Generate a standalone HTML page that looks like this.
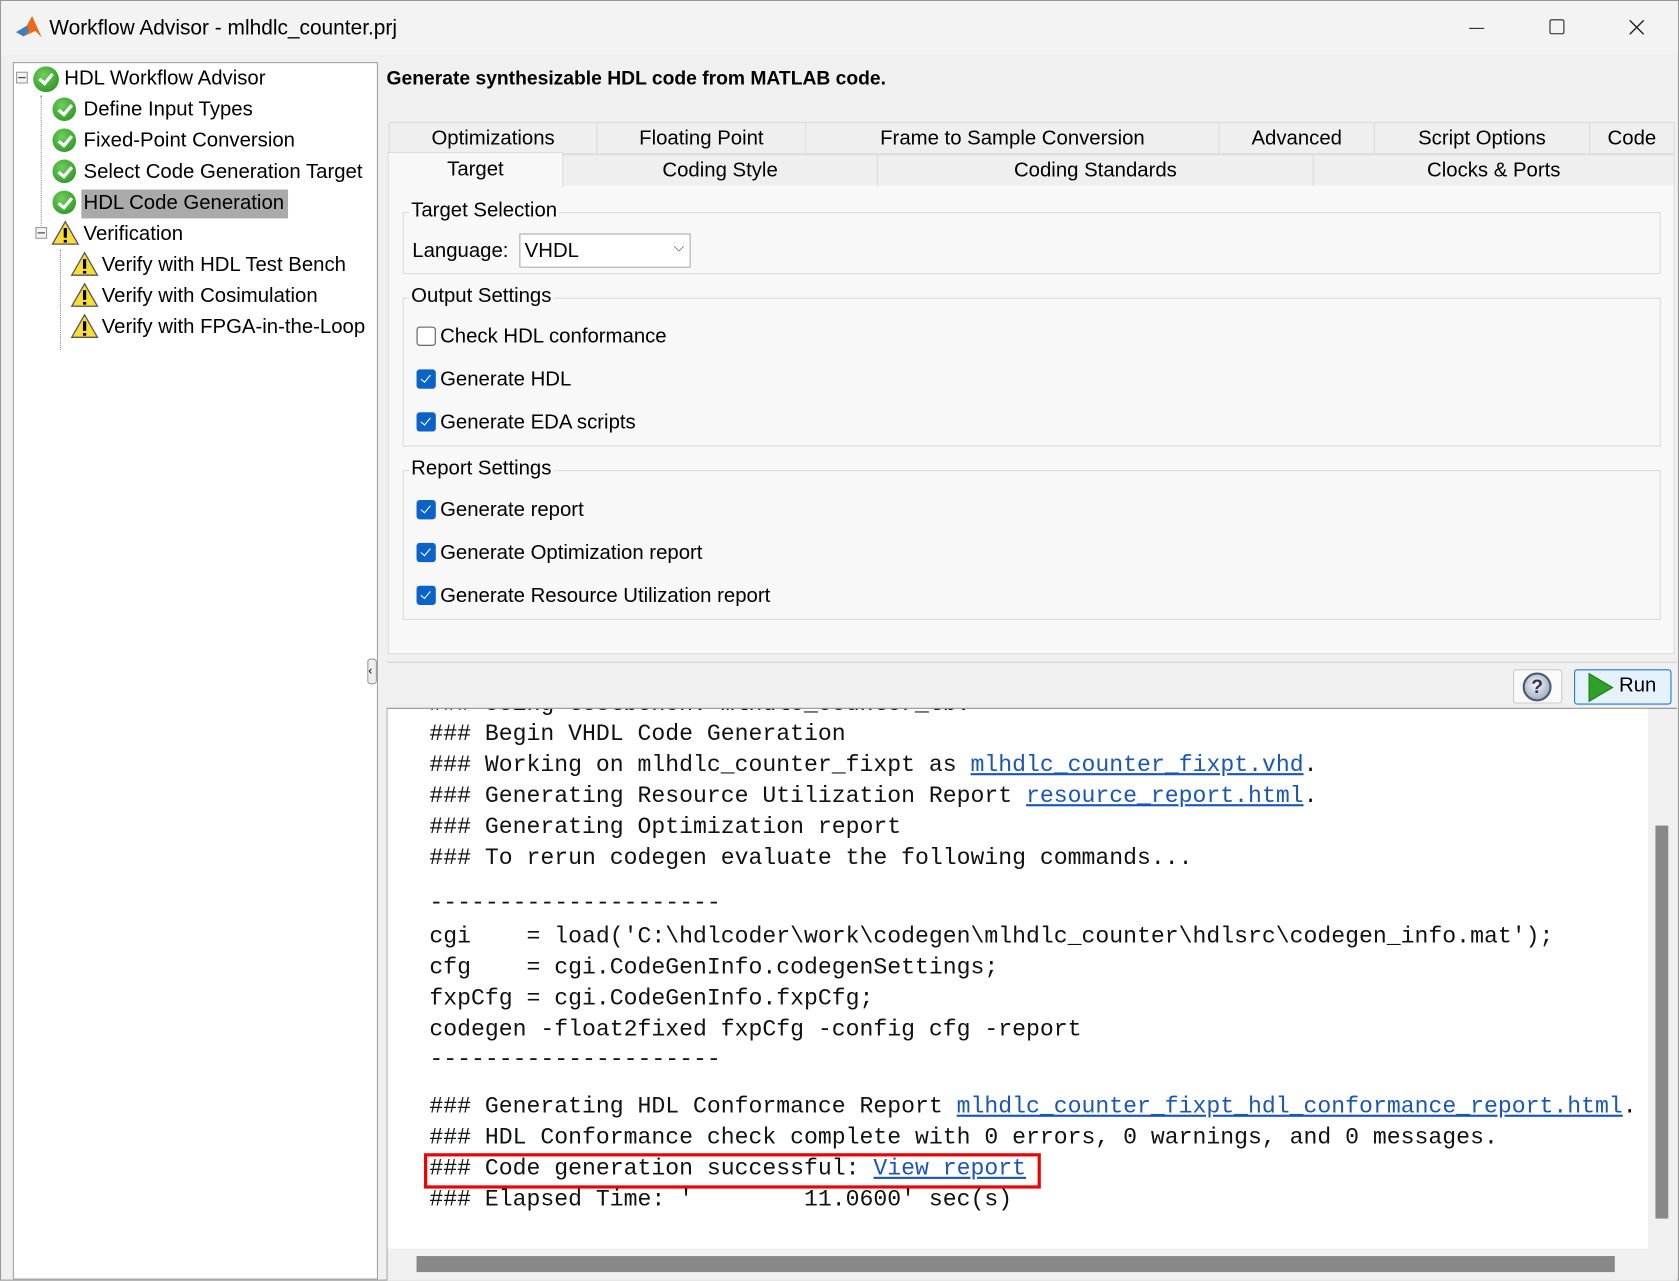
<!DOCTYPE html>
<html><head><meta charset="utf-8"><style>
*{box-sizing:border-box;margin:0;padding:0}
html,body{width:1679px;height:1281px;overflow:hidden;background:#f0f0f0}
#w{position:absolute;left:0;top:0;width:1568px;height:1196px;transform:scale(1.07079);transform-origin:0 0;font-family:"Liberation Sans",sans-serif;color:#000;background:#f0f0f0;border:1px solid #999}
.a{position:absolute;white-space:nowrap}
.t{font-size:19px}
.mono{font-family:"Liberation Mono",monospace;font-size:21.6px;color:#111;white-space:pre}
.lk{color:#1a56b8;text-decoration:underline}
.tab{position:absolute;height:30px;border:1px solid #dcdcdc;background:#efefef;font-size:19px;text-align:center;line-height:30px}
.grp{position:absolute;border:1px solid #dcdcdc}
.lg{position:absolute;background:#f8f8f8;font-size:19px;padding:0 2px;top:-13px;left:5px}
.cb{position:absolute;width:18px;height:18px;border-radius:3px;background:#0b63c8}
.cb:after{content:"";position:absolute;left:6px;top:3px;width:4px;height:8px;border:solid #fff;border-width:0 1.5px 1.5px 0;transform:rotate(40deg)}
.ok{position:absolute;width:22px;height:22px;border-radius:50%;background:radial-gradient(circle at 40% 35%,#6fcf5a,#1f8a1a)}
.ok:after{content:"";position:absolute;left:8px;top:4px;width:5px;height:10px;border:solid #fff;border-width:0 3px 3px 0;transform:rotate(40deg)}
</style></head><body><div id="w">
<div class="a" style="left:0;top:0;width:1566px;height:50px;background:#f3f3f3"></div>
<svg class="a" style="left:12px;top:12px" width="28" height="26" viewBox="0 0 28 26"><polygon points="2,17 12,11 17,2 26,22 20,16 9,21" fill="#e86a1a"/><polygon points="2,17 12,11 14,16 9,21" fill="#3a7fc4"/></svg>
<div class="a" style="left:45px;top:14px;font-size:19.5px">Workflow Advisor - mlhdlc_counter.prj</div>
<div class="a" style="left:1371px;top:25px;width:14px;height:1px;background:#222"></div>
<div class="a" style="left:1446px;top:17px;width:14px;height:14px;border:1.5px solid #222;border-radius:2px"></div>
<svg class="a" style="left:1520px;top:17px" width="15" height="15"><path d="M1 1L14 14M14 1L1 14" stroke="#222" stroke-width="1.3"/></svg>

<!-- tree -->
<div class="a" style="left:11px;top:57px;width:341px;height:1137px;background:#fff;border:1px solid #a0a0a0"></div>
<div class="a" style="left:14px;top:66px;width:11px;height:11px;border:1px solid #999;background:#f4f4f4"></div><div class="a" style="left:16px;top:71px;width:7px;height:1px;background:#333"></div>
<div class="a" style="left:37px;top:88px;height:124px;border-left:1px dotted #888"></div>
<div class="a" style="left:32px;top:211px;width:11px;height:11px;border:1px solid #999;background:#f4f4f4"></div><div class="a" style="left:34px;top:216px;width:7px;height:1px;background:#333"></div>
<div class="a" style="left:55px;top:232px;height:94px;border-left:1px dotted #888"></div>
<div class="ok" style="left:30px;top:61px;width:24px;height:24px"></div>
<div class="a t" style="left:59px;top:62px">HDL Workflow Advisor</div>
<div class="ok" style="left:48px;top:90px"></div><div class="a t" style="left:77px;top:91px">Define Input Types</div>
<div class="ok" style="left:48px;top:119px"></div><div class="a t" style="left:77px;top:120px">Fixed-Point Conversion</div>
<div class="ok" style="left:48px;top:148px"></div><div class="a t" style="left:77px;top:149px">Select Code Generation Target</div>
<div class="a" style="left:75px;top:176px;width:193px;height:27px;background:#aaa"></div>
<div class="ok" style="left:48px;top:177px"></div><div class="a t" style="left:77px;top:178px">HDL Code Generation</div>
<svg class="a" style="left:47px;top:204px" width="26" height="24"><polygon points="13,2 25,23 1,23" fill="#f7dc3a" stroke="#555" stroke-width="1.2"/><rect x="11.5" y="8" width="3" height="9" fill="#000"/><rect x="11.5" y="19" width="3" height="2.5" fill="#000"/></svg>
<div class="a t" style="left:77px;top:207px">Verification</div>
<svg class="a" style="left:65px;top:233px" width="26" height="24"><polygon points="13,2 25,23 1,23" fill="#f7dc3a" stroke="#555" stroke-width="1.2"/><rect x="11.5" y="8" width="3" height="9" fill="#000"/><rect x="11.5" y="19" width="3" height="2.5" fill="#000"/></svg>
<div class="a t" style="left:94px;top:236px">Verify with HDL Test Bench</div>
<svg class="a" style="left:65px;top:262px" width="26" height="24"><polygon points="13,2 25,23 1,23" fill="#f7dc3a" stroke="#555" stroke-width="1.2"/><rect x="11.5" y="8" width="3" height="9" fill="#000"/><rect x="11.5" y="19" width="3" height="2.5" fill="#000"/></svg>
<div class="a t" style="left:94px;top:265px">Verify with Cosimulation</div>
<svg class="a" style="left:65px;top:291px" width="26" height="24"><polygon points="13,2 25,23 1,23" fill="#f7dc3a" stroke="#555" stroke-width="1.2"/><rect x="11.5" y="8" width="3" height="9" fill="#000"/><rect x="11.5" y="19" width="3" height="2.5" fill="#000"/></svg>
<div class="a t" style="left:94px;top:294px">Verify with FPGA-in-the-Loop</div>
<div class="a" style="left:342px;top:614px;width:9px;height:24px;border:1px solid #999;border-radius:3px;background:#eee;font-size:11px;line-height:22px">‹</div>

<!-- right -->
<div class="a" style="left:360px;top:62px;font-size:18px;font-weight:bold">Generate synthesizable HDL code from MATLAB code.</div>
<div class="tab" style="left:362px;top:113px;width:195px">Optimizations</div>
<div class="tab" style="left:556px;top:113px;width:196px">Floating Point</div>
<div class="tab" style="left:751px;top:113px;width:387px">Frame to Sample Conversion</div>
<div class="tab" style="left:1137px;top:113px;width:146px">Advanced</div>
<div class="tab" style="left:1282px;top:113px;width:202px">Script Options</div>
<div class="tab" style="left:1483px;top:113px;width:80px">Code</div>
<div class="tab" style="left:524px;top:143px;width:295px">Coding Style</div>
<div class="tab" style="left:818px;top:143px;width:408px">Coding Standards</div>
<div class="tab" style="left:1225px;top:143px;width:338px">Clocks &amp; Ports</div>
<div class="a" style="left:361px;top:172px;width:1202px;height:438px;background:#f8f8f8;border:1px solid #dcdcdc;border-top:none"></div>
<div class="tab" style="left:361px;top:141px;width:164px;height:33px;background:#f8f8f8;border-bottom:none;line-height:32px">Target</div>

<div class="grp" style="left:375px;top:197px;width:1175px;height:58px"><span class="lg">Target Selection</span></div>
<div class="a t" style="left:384px;top:223px">Language:</div>
<div class="a" style="left:484px;top:217px;width:160px;height:32px;border:1px solid #aaa;background:#fff;font-size:19px;padding:5px 4px">VHDL<span style="position:absolute;right:5px;top:4px;font-size:13px;color:#555">⌵</span></div>

<div class="grp" style="left:375px;top:277px;width:1175px;height:139px"><span class="lg">Output Settings</span></div>
<div class="a" style="left:388px;top:304px;width:18px;height:18px;border:1px solid #555;border-radius:3px;background:#fff"></div>
<div class="a t" style="left:410px;top:303px">Check HDL conformance</div>
<div class="cb" style="left:388px;top:344px"></div><div class="a t" style="left:410px;top:343px">Generate HDL</div>
<div class="cb" style="left:388px;top:384px"></div><div class="a t" style="left:410px;top:383px">Generate EDA scripts</div>

<div class="grp" style="left:375px;top:438px;width:1175px;height:140px"><span class="lg">Report Settings</span></div>
<div class="cb" style="left:388px;top:466px"></div><div class="a t" style="left:410px;top:465px">Generate report</div>
<div class="cb" style="left:388px;top:506px"></div><div class="a t" style="left:410px;top:505px">Generate Optimization report</div>
<div class="cb" style="left:388px;top:546px"></div><div class="a t" style="left:410px;top:545px">Generate Resource Utilization report</div>

<div class="a" style="left:360px;top:617px;width:1205px;height:1px;background:#d0d0d0"></div>
<div class="a" style="left:1412px;top:624px;width:46px;height:32px;border:1px solid #ccc;border-radius:3px;background:#fafafa"></div>
<div class="a" style="left:1421px;top:627px;width:27px;height:27px;border-radius:50%;background:radial-gradient(circle at 45% 40%,#f4f6fa,#8a9ab0);border:2px solid #4a5a70;text-align:center;font:bold 18px/23px 'Liberation Sans',sans-serif;color:#334">?</div>
<div class="a" style="left:1469px;top:624px;width:91px;height:33px;border:1px solid #1b78d8;border-radius:3px;background:#e5f1fb"></div>
<svg class="a" style="left:1482px;top:627px" width="24" height="28"><polygon points="1,1 23,14 1,27" fill="#2fa02a" stroke="#1a7a18"/></svg>
<div class="a t" style="left:1511px;top:629px">Run</div>

<!-- output -->
<div class="a" style="left:360px;top:660px;width:1205px;height:535px;background:#f0f0f0;border-top:1px solid #888;border-left:1px solid #aaa"></div>
<div class="a" style="left:361px;top:661px;width:1177px;height:504px;background:#fff;overflow:hidden">
<div class="a mono" style="left:39px;top:-16px">### Using testbench: mlhdlc_counter_tb.</div>
<div class="a mono" style="left:39px;top:12px">### Begin VHDL Code Generation</div>
<div class="a mono" style="left:39px;top:41px">### Working on mlhdlc_counter_fixpt as <span class="lk">mlhdlc_counter_fixpt.vhd</span>.</div>
<div class="a mono" style="left:39px;top:70px">### Generating Resource Utilization Report <span class="lk">resource_report.html</span>.</div>
<div class="a mono" style="left:39px;top:99px">### Generating Optimization report</div>
<div class="a mono" style="left:39px;top:128px">### To rerun codegen evaluate the following commands...</div>
<div class="a mono" style="left:39px;top:170px">---------------------</div>
<div class="a mono" style="left:39px;top:201px">cgi    = load('C:\hdlcoder\work\codegen\mlhdlc_counter\hdlsrc\codegen_info.mat');</div>
<div class="a mono" style="left:39px;top:230px">cfg    = cgi.CodeGenInfo.codegenSettings;</div>
<div class="a mono" style="left:39px;top:259px">fxpCfg = cgi.CodeGenInfo.fxpCfg;</div>
<div class="a mono" style="left:39px;top:288px">codegen -float2fixed fxpCfg -config cfg -report</div>
<div class="a mono" style="left:39px;top:316px">---------------------</div>
<div class="a mono" style="left:39px;top:360px">### Generating HDL Conformance Report <span class="lk">mlhdlc_counter_fixpt_hdl_conformance_report.html</span>.</div>
<div class="a mono" style="left:39px;top:389px">### HDL Conformance check complete with 0 errors, 0 warnings, and 0 messages.</div>
<div class="a mono" style="left:39px;top:418px">### Code generation successful: <span class="lk">View report</span></div>
<div class="a mono" style="left:39px;top:447px">### Elapsed Time: '        11.0600' sec(s)</div>
<div class="a" style="left:34px;top:415px;width:576px;height:33px;border:3px solid #e00"></div>
</div>
<div class="a" style="left:1545px;top:770px;width:12px;height:367px;background:#888"></div>
<div class="a" style="left:388px;top:1172px;width:1119px;height:15px;background:#888"></div>
</div></body></html>
